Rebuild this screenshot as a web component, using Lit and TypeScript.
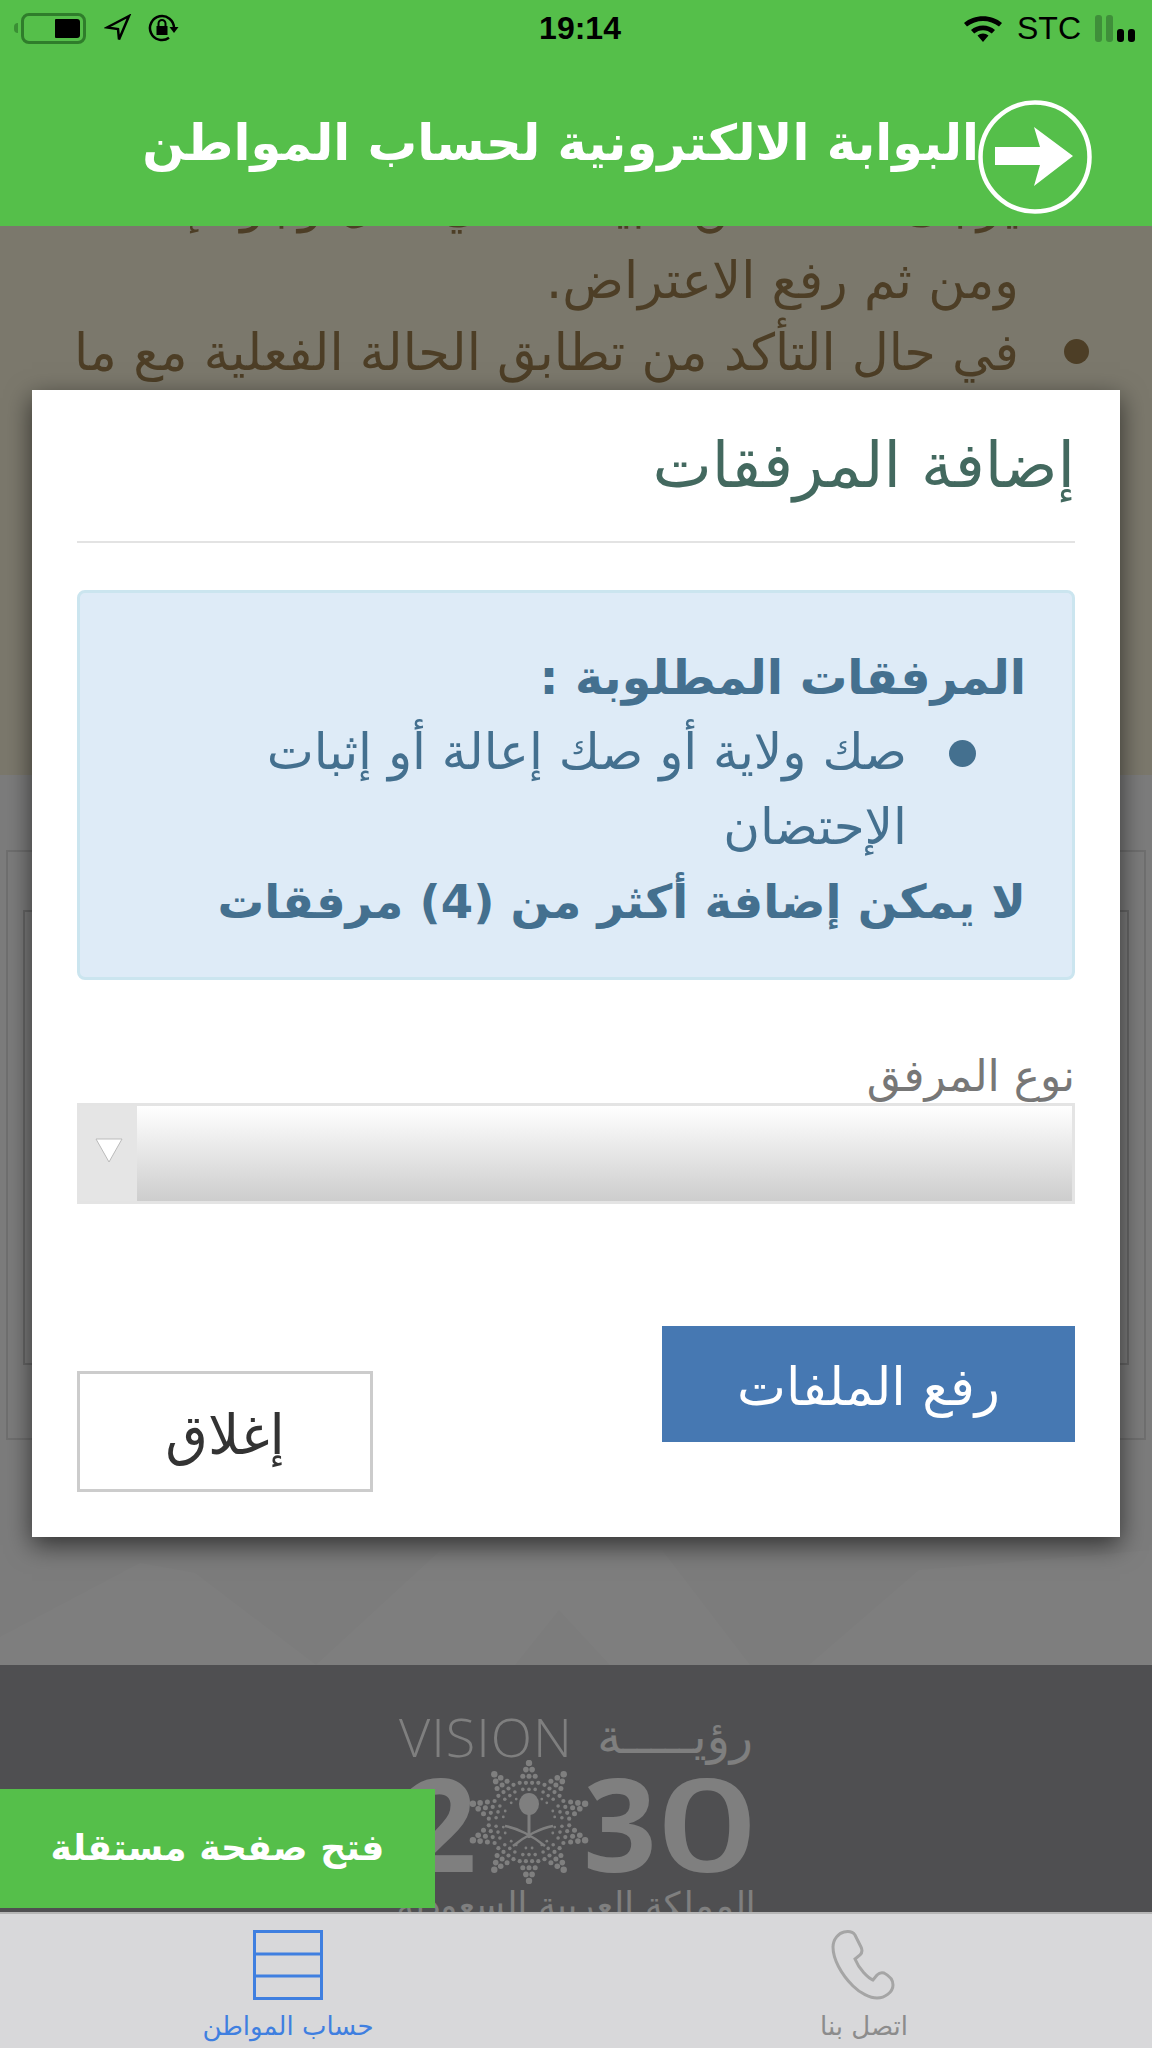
import { LitElement, html, css, svg, unsafeCSS } from "lit";
import { customElement } from "lit/decorators.js";

const AR = unsafeCSS(`"DejaVu Sans", "Noto Sans", sans-serif`);

function emblemDots() {
  const out: unknown[] = [];
  const cx = 60, cy = 62;
  const rows = [1, 2, 3, 4, 3, 2];
  for (let a = 0; a < 10; a++) {
    const angle = ((a * 36 + 90) * Math.PI) / 180;
    const ux = Math.cos(angle), uy = -Math.sin(angle);
    rows.forEach((n, i) => {
      const d = 59 - i * 6.6;
      for (let s = 0; s < n; s++) {
        const off = (s - (n - 1) / 2) * 6.2;
        const x = cx + ux * d - uy * off;
        const y = cy + uy * d + ux * off;
        const r = 3.2 - i * 0.36;
        out.push(svg`<circle cx=${x.toFixed(1)} cy=${y.toFixed(1)} r=${r.toFixed(1)}></circle>`);
      }
    });
  }
  return out;
}

@customElement("app-root")
export class AppRoot extends LitElement {
  static styles = css`
    :host { display: block; width: 1152px; height: 2048px; overflow: hidden; position: relative; font-family: ${AR}; }
    * { box-sizing: border-box; }
    .page { display: flex; flex-direction: column; height: 2048px; background: #fff; }
    .top { height: 226px; background: #55bf4a; flex: none; display: flex; flex-direction: column; position: relative; z-index: 3; }
    .status { height: 56px; display: flex; align-items: center; justify-content: space-between; padding: 0 17px 0 14px; color: #000; position: relative; }
    .status-l, .status-r { display: flex; align-items: center; }
    .status-l { gap: 18px; }
    .status-l .lock { margin-left: -3px; }
    .status-r { gap: 14px; font: 400 32px "Liberation Sans", sans-serif; }
    .time { position: absolute; left: 8px; right: 0; text-align: center; font: 700 32px "Liberation Sans", sans-serif; pointer-events: none; }
    .titlebar { flex: 1; display: flex; justify-content: flex-end; align-items: flex-start; padding: 0 60px 0 0; }
    .titlebar h1 { margin: 57px -1px 0 0; font: 700 49.500px/60px ${AR}; color: #fff; white-space: nowrap; direction: rtl; }
    .titlebar svg { margin-top: 44px; flex: none; }
    .bg-text { flex: none; height: 549px; background: #f6f0d8; overflow: hidden; direction: rtl; padding: 0 133px 0 0; color: #9a7d4c; font-size: 51px; line-height: 71px; margin: 0; list-style: none; }
    .bg-text li { white-space: nowrap; position: relative; }
    .bg-text .first { margin-top: -58px; margin-bottom: 6px; }
    .bg-text .bullet { margin-top: 1px; }
    .bg-text .bullet::before { content: ""; position: absolute; right: -70px; top: 22px; width: 25px; height: 25px; border-radius: 50%; background: #9a7d4c; }
    .mid { flex: 1; background: #f9f9f9; display: flex; flex-direction: column; position: relative; overflow: hidden; padding: 75px 6px 0; }
    .card-outer { height: 590px; border: 2px solid #dedede; padding: 58px 15px 0; }
    .card-inner { height: 455px; border: 2px solid #cfcfcf; }
    .mid svg.pattern { position: absolute; left: 0; bottom: 0; width: 1152px; height: 125px; }
    .vision { height: 247px; flex: none; background: #9e9fa3; overflow: hidden; display: flex; flex-direction: column; align-items: center; padding-top: 41px; color: #fff; }
    .v-line { width: 354px; display: flex; justify-content: space-between; align-items: center; height: 60px; }
    .v-word { font: 300 54px/60px "Open Sans", sans-serif; letter-spacing: 1px; }
    .v-ar { font: 400 48px/60px ${AR}; direction: rtl; }
    .v-num { display: flex; align-items: center; height: 112px; width: 354px; font: 700 129px/112px "Open Sans", sans-serif; }
    .v-num .two { margin-left: 4px; width: 66px; flex: none; }
    .v-num .three { margin-left: -6px; flex: none; width: 74px; }
    .v-num .zero { display: block; flex: none; font-weight: 600; transform: scaleX(1.36); transform-origin: left center; }
    .v-num svg { width: 120px; height: 124px; fill: #fff; flex: none; }
    .v-sub { font: 400 35px/40px ${AR}; direction: rtl; white-space: nowrap; margin-top: 7px; }
    .tabs { height: 136px; flex: none; display: grid; grid-template-columns: 1fr 1fr; background: #d8d8da; border-top: 2px solid #b5b5b5; position: relative; z-index: 3; }
    .tab { display: flex; flex-direction: column; align-items: center; padding-top: 16px; font-size: 26px; color: #8c8c8c; direction: rtl; }
    .tab.active { color: #3f7fe0; }
    .tab svg { width: 70px; height: 70px; display: block; flex: none; }
    .tab span { margin-top: 9px; line-height: 34px; white-space: nowrap; }
    .backdrop { position: absolute; inset: 0; background: rgba(0,0,0,0.5); z-index: 1; }
    .modal { position: absolute; left: 32px; top: 390px; width: 1088px; height: 1147px; background: #fff; z-index: 2; box-shadow: 0 8px 24px rgba(0,0,0,0.6); padding: 0 45px; direction: rtl; display: flex; flex-direction: column; }
    .modal h2 { margin: 0; height: 153px; flex: none; border-bottom: 2px solid #e3e3e3; font: 400 63px/152px ${AR}; color: #43695f; }
    .alert { margin-top: 47px; height: 390px; flex: none; background: #deebf7; border: 3px solid #cbe5ef; border-radius: 8px; padding: 47px 46px 0; color: #44708f; font-size: 50px; line-height: 75px; }
    .alert b { font-weight: 700; display: block; font-size: 46.500px; white-space: nowrap; }
    .alert b.head { font-size: 47.500px; }
    .alert ul { margin: 0; padding: 0 119px 0 0; list-style: none; position: relative; }
    .alert li::before { content: ""; position: absolute; right: 50px; top: 25px; width: 27px; height: 27px; border-radius: 50%; background: #44708f; }
    label { display: block; margin-top: 71px; margin-bottom: 3px; font-size: 44px; line-height: 49px; color: #777; flex: none; }
    .select { height: 101px; flex: none; border: 3px solid #e4e4e4; display: flex; direction: ltr; background: linear-gradient(#fff, #cdcdcd); }
    .select .arrow { width: 57px; flex: none; background: #e5e5e5; display: flex; align-items: center; justify-content: center; }
    .select svg { width: 28px; height: 28px; display: block; margin-top: -8px; }
    .select .fill { flex: 1; }
    .actions { display: flex; justify-content: space-between; align-items: flex-start; margin-top: 122px; }
    .upload { width: 413px; height: 116px; padding-top: 6px; background: #4678b2; color: #fff; font-size: 52px; display: flex; align-items: center; justify-content: center; }
    .close { width: 296px; height: 121px; margin-top: 45px; padding-top: 6px; border: 3px solid #ccc; color: #333; font-size: 55px; display: flex; align-items: center; justify-content: center; background: #fff; }
    .float { position: absolute; left: 0; top: 1789px; width: 435px; height: 119px; background: #55bf4a; color: #fff; font: 700 36px/117px ${AR}; text-align: center; direction: rtl; z-index: 3; }
    .batt-wrap { display: flex; align-items: center; gap: 3px; }
    .nub { display: block; width: 4px; height: 10px; background: #3a8f34; border-radius: 4px 0 0 4px; }
    .batt { width: 65px; height: 31px; border: 3px solid #2f7d2b; border-radius: 8px; padding: 3px; display: flex; justify-content: flex-end; }
    .batt i { display: block; width: 25px; background: #000; border-radius: 1px 3px 3px 1px; }
    .bars { display: flex; align-items: flex-end; gap: 4px; }
    .bars i { display: block; width: 7px; border-radius: 3px; background: #000; }
    .bars i.off { background: #3f8f3a; height: 27px; }
    .bars i.on { height: 13px; }
  `;

  render() {
    return html`
      <div class="page">
        <div class="top">
          <div class="status">
            <div class="status-l">
              <div class="batt-wrap"><span class="nub"></span><div class="batt"><i></i></div></div>
              <svg width="28" height="28" viewBox="0 0 28 28"><path d="M25 2 3 13.500l11 1.500 1 10.500z" fill="none" stroke="#000" stroke-width="2.500" stroke-linejoin="miter"></path></svg>
              <svg class="lock" width="32" height="30" viewBox="0 0 32 30"><path d="M27 15A12 12 0 1 0 22 24.800" fill="none" stroke="#000" stroke-width="2.500"></path><path d="M22.500 14h9L27 20z" fill="#000"></path><path d="M9.500 13h11v9h-11z" fill="#000"></path><path d="M11.500 13v-2.500a3.500 3.500 0 0 1 7 0V13" fill="none" stroke="#000" stroke-width="2"></path></svg>
            </div>
            <div class="time">19:14</div>
            <div class="status-r">
              <svg width="40" height="28" viewBox="0 0 40 28"><path d="M1 9C11 0 29 0 39 9l-3 3.500C27 5 13 5 4 12.500z M8 16c6.500-6 17.500-6 24 0l-3.200 3.500c-5-4.500-12.600-4.500-17.600 0z M14.500 21.500c3.200-2.800 7.800-2.800 11 0L20 28z" fill="#000"></path></svg>
              <span>STC</span>
              <div class="bars"><i class="off"></i><i class="off"></i><i class="on"></i><i class="on"></i></div>
            </div>
          </div>
          <div class="titlebar">
            <h1>البوابة الالكترونية لحساب المواطن</h1>
            <svg width="114" height="114" viewBox="0 0 114 114"><circle cx="57" cy="57" r="54.500" fill="none" stroke="#fff" stroke-width="4.500"></circle><path d="M17 47h45L56 27l39 29-39 30 6-21H17z" fill="#fff"></path></svg>
          </div>
        </div>
        <ul class="bg-text">
          <li class="first">يرجى التأكد من البيانات في حال وجود إختلاف</li>
          <li>ومن ثم رفع الاعتراض.</li>
          <li class="bullet">في حال التأكد من تطابق الحالة الفعلية مع ما</li>
        </ul>
        <div class="mid">
          <div class="card-outer"><div class="card-inner"></div></div>
          <svg class="pattern" viewBox="0 0 1152 125"><path d="M441 10h221l88 115H610l-51-55-44 55H316z M0 97 140 23l55 10 121 92H0z M809 125 919 30l233-20v115z" fill="#fff" opacity=".55"></path></svg>
        </div>
        <div class="vision">
          <div class="v-line"><span class="v-word">VISION</span><span class="v-ar">رؤيـــــة</span></div>
          <div class="v-num"><span class="two">2</span><svg viewBox="0 0 120 124">${emblemDots()}<ellipse cx="60" cy="44" rx="10" ry="11"></ellipse><path d="M60 50v28" stroke="#fff" stroke-width="3"></path><path d="M36 66c12 2 28 10 40 20M84 66c-12 2-28 10-40 20" fill="none" stroke="#fff" stroke-width="2.500"></path></svg><span class="three">3</span><span class="zero">0</span></div>
          <div class="v-sub">المملكة العربية السعودية</div>
        </div>
        <div class="tabs">
          <div class="tab active">
            <svg viewBox="0 0 70 70"><path d="M1.500 1.500h67v67h-67z M1.500 24h67 M1.500 46h67" fill="none" stroke="#3f7fe0" stroke-width="3"></path></svg>
            <span>حساب المواطن</span>
          </div>
          <div class="tab">
            <svg viewBox="0 0 70 70"><path d="M15 2c-5 1-11 7-11 15 0 12 8 27 20 39 7 7 17 12 24 12 8 0 16-6 16-13 0-5-3-9-9-12-3-1-5 0-7 2l-4 5c-5-2-14-11-18-21l5-4c2-2 3-4 1-8l-6-12c-2-3-6-4-11-3z" fill="none" stroke="#a5a5a5" stroke-width="3"></path></svg>
            <span>اتصل بنا</span>
          </div>
        </div>
      </div>
      <div class="backdrop"></div>
      <div class="modal">
        <h2>إضافة المرفقات</h2>
        <div class="alert">
          <b class="head">المرفقات المطلوبة :</b>
          <ul><li>صك ولاية أو صك إعالة أو إثبات الإحتضان</li></ul>
          <b>لا يمكن إضافة أكثر من (4) مرفقات</b>
        </div>
        <label>نوع المرفق</label>
        <div class="select">
          <div class="arrow"><svg viewBox="0 0 28 28"><path d="M1 3h26L14 26z" fill="#fff" stroke="#bbb" stroke-width="1"></path></svg></div>
          <div class="fill"></div>
        </div>
        <div class="actions">
          <div class="upload">رفع الملفات</div>
          <div class="close">إغلاق</div>
        </div>
      </div>
      <div class="float">فتح صفحة مستقلة</div>
    `;
  }
}
